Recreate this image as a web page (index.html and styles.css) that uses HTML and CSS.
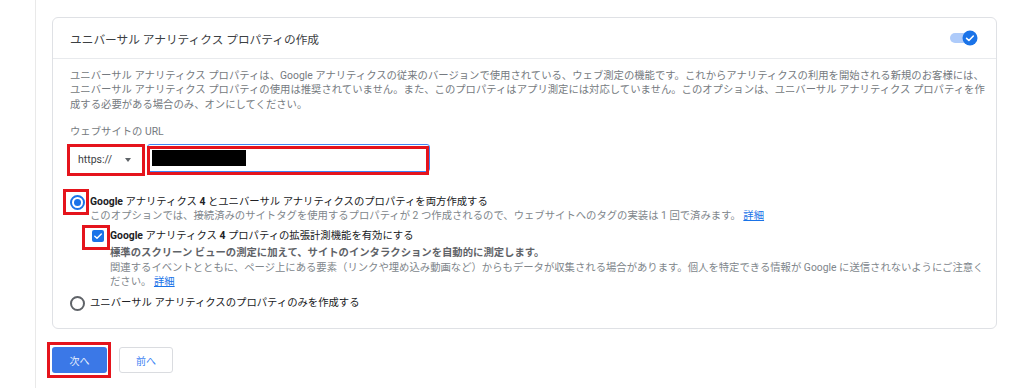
FILE: index.html
```html
<!DOCTYPE html>
<html lang="ja">
<head>
    <meta charset="UTF-8">
    <title>プロパティの作成</title>
    <link rel="stylesheet" href="styles.css">
</head>
<body>
    <div class="page">
        <div class="card">
            <div class="card-head">
                <span class="card-title">ユニバーサル アナリティクス プロパティの作成</span>
                <svg class="toggle" width="28" height="16" viewBox="0 0 28 16">
                    <rect x="0" y="3" width="20" height="10" rx="5" fill="#aecbfa"/>
                    <circle cx="20" cy="8" r="7.5" fill="#1a73e8"/>
                    <path d="M16.6 8.3 L18.9 10.5 L23.3 6" fill="none" stroke="#fff" stroke-width="1.6" stroke-linecap="round" stroke-linejoin="round"/>
                </svg>
            </div>
            <div class="card-body">
                <p class="intro">ユニバーサル アナリティクス プロパティは、Google アナリティクスの従来のバージョンで使用されている、ウェブ測定の機能です。これからアナリティクスの利用を開始される新規のお客様には、<br>ユニバーサル アナリティクス プロパティの使用は推奨されていません。また、このプロパティはアプリ測定には対応していません。このオプションは、ユニバーサル アナリティクス プロパティを作<br>成する必要がある場合のみ、オンにしてください。</p>

                <div class="field-label">ウェブサイトの URL</div>
                <div class="url-row">
                    <div class="select marked">
                        <span>https://</span>
                        <span class="arrow"></span>
                    </div>
                    <div class="url-input">
                        <span class="redacted"></span>
                    </div>
                </div>

                <div class="options">
                    <div class="option">
                        <span class="radio checked marked"></span>
                        <div class="option-text">
                            <div class="option-label"><b>Google</b> アナリティクス <b>4</b> とユニバーサル アナリティクスのプロパティを両方作成する</div>
                            <div class="option-desc">このオプションでは、接続済みのサイトタグを使用するプロパティが 2 つ作成されるので、ウェブサイトへのタグの実装は 1 回で済みます。 <a href="#">詳細</a></div>

                            <div class="check-row">
                                <span class="checkbox marked">
                                    <svg width="12" height="12" viewBox="0 0 12 12">
                                        <path d="M2.8 6.2 L5 8.3 L9.3 3.9" fill="none" stroke="#fff" stroke-width="1.4" stroke-linecap="round" stroke-linejoin="round"/>
                                    </svg>
                                </span>
                                <div class="option-text">
                                    <div class="option-label"><b>Google</b> アナリティクス <b>4</b> プロパティの拡張計測機能を有効にする</div>
                                    <div class="check-strong">標準のスクリーン ビューの測定に加えて、サイトのインタラクションを自動的に測定します。</div>
                                    <div class="option-desc nowrap">関連するイベントとともに、ページ上にある要素（リンクや埋め込み動画など）からもデータが収集される場合があります。個人を特定できる情報が Google に送信されないようにご注意く<br>ださい。 <a href="#">詳細</a></div>
                                </div>
                            </div>
                        </div>
                    </div>

                    <div class="option option-last">
                        <span class="radio"></span>
                        <div class="option-text">
                            <div class="option-label">ユニバーサル アナリティクスのプロパティのみを作成する</div>
                        </div>
                    </div>
                </div>
            </div>
        </div>

        <div class="actions">
            <button class="btn-primary marked">次へ</button>
            <button class="btn-secondary">前へ</button>
        </div>
    </div>
</body>
</html>
```

FILE: styles.css
```css
body {
    margin: 0;
    padding: 0;
    background-color: #fff;
    font-family: Roboto, "Noto Sans CJK JP", sans-serif;
    color: #3c4043;
    font-size: 10.35px;
}

.page {
    margin-left: 35px;
    min-height: 388px;
    box-sizing: border-box;
    border-left: 1px solid #e9e9e9;
    padding: 17px 27px 0 16px;
}

.card {
    border: 1px solid #dfe1e5;
    border-radius: 6px;
}

.card-head {
    height: 40px;
    display: flex;
    align-items: center;
    justify-content: space-between;
    padding: 0 18px 0 17px;
    border-bottom: 1px solid #e8eaed;
}

.card-title {
    font-size: 11.7px;
    color: #3c4043;
}

.toggle {
    display: block;
}

.card-body {
    padding: 10px 17px 17px 17px;
}

.intro {
    margin: 0;
    line-height: 14.4px;
    color: #757a80;
    white-space: nowrap;
}

.nowrap {
    white-space: nowrap;
}

.field-label {
    margin-top: 13px;
    line-height: 14.4px;
    color: #757a80;
}

.url-row {
    margin-top: 4px;
    display: flex;
    align-items: flex-start;
    gap: 5px;
}

/* red annotation frames drawn over the screenshot */
.marked {
    position: relative;
}

.marked::after {
    content: "";
    position: absolute;
    border: 3px solid #e5141c;
    pointer-events: none;
}

.select {
    margin-top: 3px;
    width: 72px;
    height: 26px;
    box-sizing: border-box;
    display: flex;
    align-items: center;
    justify-content: space-between;
    padding: 0 11px 0 8px;
    background: #fff;
    box-shadow: 0 0 0 1px #eceef0, 0 1px 2px rgba(0, 0, 0, 0.12);
    color: #3c4043;
    font-size: 10.5px;
}

.select.marked::after {
    inset: -3px;
}

.arrow {
    width: 0;
    height: 0;
    border-left: 3.5px solid transparent;
    border-right: 3.5px solid transparent;
    border-top: 4px solid #5f6368;
}

.url-input {
    position: relative;
    width: 283px;
    height: 28px;
    box-sizing: border-box;
    border: 1px solid #4285f4;
    border-radius: 3px;
    padding: 5px 0 0 4px;
}

.url-input::after {
    content: "";
    position: absolute;
    left: -1px;
    top: 1px;
    right: 0;
    bottom: -4px;
    border: 3px solid #e5141c;
}

.redacted {
    display: block;
    width: 94px;
    height: 16px;
    background: #000;
}

.options {
    margin-top: 22px;
}

.option {
    display: flex;
    align-items: flex-start;
    gap: 5px;
}

.option-last {
    margin-top: 7px;
}

.option-text {
    flex: 1;
    line-height: 14.4px;
}

.option-label {
    color: #202124;
}

.option-label b {
    font-weight: 700;
}

.option-desc {
    color: #80868b;
}

.option-desc a {
    color: #1a73e8;
}

.radio {
    flex: none;
    width: 15px;
    height: 15px;
    box-sizing: border-box;
    border: 2px solid #5f6368;
    border-radius: 50%;
    display: flex;
    align-items: center;
    justify-content: center;
}

.radio.checked {
    border-color: #1a73e8;
}

.radio.checked::before {
    content: "";
    width: 7px;
    height: 7px;
    border-radius: 50%;
    background: #1a73e8;
}

.radio.marked::after {
    top: -8px;
    right: -6px;
    bottom: -7px;
    left: -9px;
}

.check-row {
    margin-top: 6px;
    display: flex;
    align-items: flex-start;
    gap: 6px;
    padding-left: 2px;
}

.checkbox {
    flex: none;
    width: 12px;
    height: 12px;
    margin-top: 1px;
    border-radius: 2px;
    background: #1a73e8;
    display: flex;
}

.checkbox.marked::after {
    top: -5px;
    right: -6px;
    bottom: -8px;
    left: -10px;
}

.check-strong {
    margin-top: 2.4px;
    color: #5f6368;
    font-weight: 700;
}

.actions {
    margin-top: 18px;
    display: flex;
    gap: 12px;
}

.actions button {
    height: 26px;
    border-radius: 3px;
    font-family: Roboto, "Noto Sans CJK JP", sans-serif;
    font-size: 10px;
    cursor: pointer;
}

.btn-primary {
    width: 55px;
    border: none;
    background: #3b78e7;
    color: #e8f0fe;
}

.btn-primary.marked::after {
    top: -5px;
    right: -4px;
    bottom: -5px;
    left: -5px;
}

.btn-secondary {
    width: 54px;
    border: 1px solid #dadce0;
    background: #fff;
    color: #4285f4;
}
```
